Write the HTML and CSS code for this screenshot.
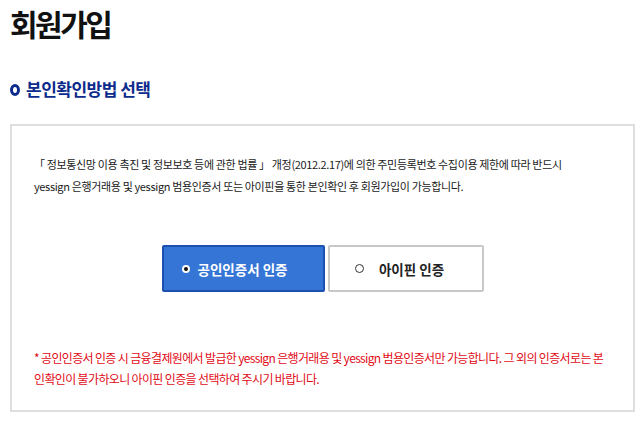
FILE: index.html
```html
<!DOCTYPE html>
<html>

<head>
    <title>회원가입</title>
    <link rel="stylesheet" href="styles.css">
</head>

<body>
    <div class="page">
        <h1 class="page-title">회원가입</h1>
        <h2 class="section-title"><span class="bullet"></span>본인확인방법 선택</h2>

        <div class="auth-box">
            <p class="notice">
                「 정보통신망 이용 촉진 및 정보보호 등에 관한 법률 」 개정(2012.2.17)에 의한 주민등록번호 수집이용 제한에 따라 반드시<br>
                yessign 은행거래용 및 yessign 범용인증서 또는 아이핀을 통한 본인확인 후 회원가입이 가능합니다.
            </p>

            <div class="auth-buttons">
                <a href="#" class="auth-btn active"><span class="radio"></span>공인인증서 인증</a>
                <a href="#" class="auth-btn"><span class="radio"></span>아이핀 인증</a>
            </div>

            <p class="warning">
                * 공인인증서 인증 시 금융결제원에서 발급한 yessign 은행거래용 및 yessign 범용인증서만 가능합니다. 그 외의 인증서로는 본<br>
                인확인이 불가하오니 아이핀 인증을 선택하여 주시기 바랍니다.
            </p>
        </div>
    </div>
</body>

</html>
```

FILE: styles.css
```css
body {
    margin: 0;
    font-family: "Noto Sans CJK KR", "Noto Sans", sans-serif;
    background-color: #fff;
}

.page {
    padding: 0 6px 0 10px;
}

.page-title {
    margin: 0;
    padding-top: 2px;
    font-size: 30px;
    line-height: 42px;
    letter-spacing: -2.5px;
    font-weight: bold;
    color: #111;
}

.section-title {
    display: flex;
    align-items: center;
    margin: 34px 0 0 0;
    font-size: 17px;
    line-height: 22px;
    letter-spacing: -0.5px;
    font-weight: bold;
    color: #0d2b8c;
}

.bullet {
    width: 4px;
    height: 6px;
    border: 3px solid #0d2b8c;
    border-radius: 50%;
    margin-top: 2px;
    margin-right: 6px;
}

.auth-box {
    margin-top: 24px;
    height: 284px;
    border: 2px solid #dedede;
    padding: 0 20px 0 22px;
}

.notice {
    margin: 27px 0 0 0;
    font-size: 11px;
    line-height: 22px;
    letter-spacing: -0.35px;
    color: #1a1a1a;
}

.auth-buttons {
    display: flex;
    justify-content: center;
    gap: 3px;
    margin-top: 48px;
    margin-right: 2px;
}

.auth-btn {
    box-sizing: border-box;
    display: flex;
    align-items: center;
    justify-content: center;
    height: 47px;
    width: 156px;
    padding-right: 12px;
    border: 2px solid #c8c8c8;
    border-radius: 2px;
    background-color: #fff;
    color: #222;
    font-size: 13.5px;
    font-weight: bold;
    text-decoration: none;
}

.auth-btn.active {
    width: 163px;
    padding-right: 16px;
    border-color: #1c4fb0;
    background-color: #3475d6;
    color: #fff;
}

.radio {
    width: 7px;
    height: 7px;
    border: 1.5px solid #333;
    border-radius: 50%;
    background-color: #fff;
    margin-right: 15px;
}

.auth-btn.active .radio {
    width: 4px;
    height: 4px;
    border: 2.5px solid #fff;
    background-color: #111;
    margin-right: 7px;
}

.warning {
    margin: 55px 0 0 0;
    font-size: 12px;
    line-height: 21px;
    letter-spacing: -0.65px;
    color: #e10a17;
}
```
